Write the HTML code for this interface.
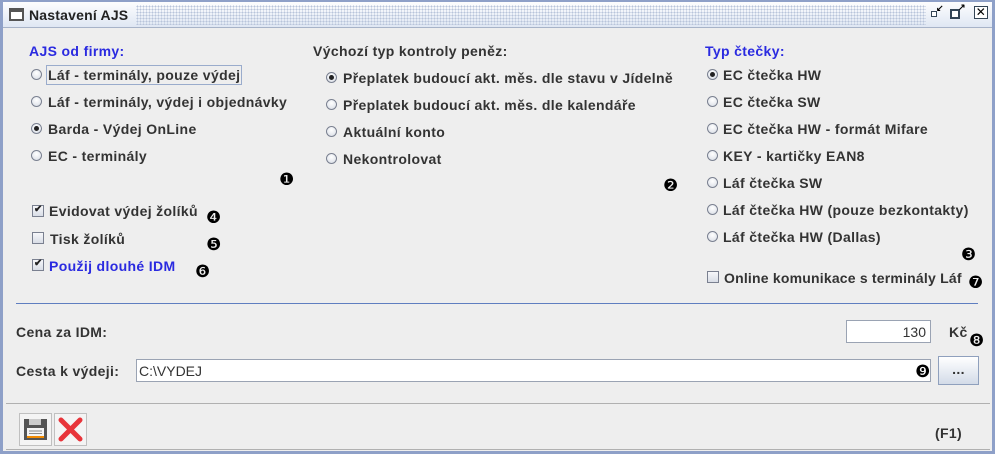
<!DOCTYPE html>
<html><head><meta charset="utf-8"><style>
*{margin:0;padding:0;box-sizing:border-box}
body{width:995px;height:454px;background:#eeeeee;font-family:"Liberation Sans",Arial,sans-serif;font-size:14px;letter-spacing:0.35px;font-weight:bold;color:#333;position:relative;overflow:hidden}
.frame{position:absolute;left:0;top:0;width:995px;height:454px;border:3px solid #8ea0c8;border-top:2px solid #8ea0c8}
.title{position:absolute;left:3px;top:2px;width:989px;height:26px;background:linear-gradient(#fdfdfe,#dfe7f3);border-bottom:1px solid #a7b3c8}
.dots{position:absolute;left:133px;top:3px;width:790px;height:20px;background-image:radial-gradient(#b8c4da 0.8px,transparent 1px);background-size:3px 3px}
.t{position:absolute;white-space:nowrap}
.blue{color:#2a2ae0}
.r{position:absolute;width:11px;height:11px;border-radius:50%;border:1px solid #7a8090;background:radial-gradient(circle at 50% 35%,#fff,#d6dbe4)}
.r.on::after{content:"";position:absolute;left:2px;top:2px;width:5px;height:5px;border-radius:50%;background:#222}
.c{position:absolute;width:12px;height:12px;border:1px solid #7a8090;background:linear-gradient(#f6f7fa,#d8dde6)}
.c.on::after{content:"✔";position:absolute;left:1px;top:-2px;font-size:10px;color:#222}
.n{position:absolute;z-index:5;font-family:"DejaVu Sans",sans-serif;font-size:17px;line-height:17px;color:#000;font-weight:normal;letter-spacing:0}
.inp{position:absolute;background:#fff;border:1px solid #9aa3b3;font-weight:normal;font-size:14px;letter-spacing:0;color:#333}
</style></head><body>
<div class="frame"></div>
<div class="title"><div class="dots"></div></div>
<div style="position:absolute;left:9px;top:8px;width:15px;height:13px;border:2px solid #555;border-top-width:4px;background:#fff"></div>
<div class="t" style="left:29px;top:7px;color:#222;letter-spacing:0.2px">Nastavení AJS</div>
<div style="position:absolute;left:931px;top:11px;width:6px;height:6px;border:1px solid #345;background:#fff"></div>
<div class="t" style="left:936px;top:3px;font-size:9px;color:#000">↙</div>
<div style="position:absolute;left:950px;top:9px;width:10px;height:10px;border:2px solid #345;background:#fff"></div>
<div class="t" style="left:958px;top:2px;font-size:9px;color:#000">↗</div>
<div style="position:absolute;left:974px;top:6px;width:14px;height:13px;border:1px solid #345;background:#fff;font-size:12px;line-height:11px;text-align:center;font-weight:normal;color:#000">✕</div>

<div class="t blue" style="left:29px;top:43px">AJS od firmy:</div>
<div class="r" style="left:31px;top:69px"></div><div class="t" style="left:48px;top:67px;outline:1px solid #9aaccc;outline-offset:1px">Láf - terminály, pouze výdej</div>
<div class="r" style="left:31px;top:96px"></div><div class="t" style="left:48px;top:94px">Láf - terminály, výdej i objednávky</div>
<div class="r on" style="left:31px;top:123px"></div><div class="t" style="left:48px;top:121px">Barda - Výdej OnLine</div>
<div class="r" style="left:31px;top:150px"></div><div class="t" style="left:48px;top:148px">EC - terminály</div>

<div class="t" style="left:313px;top:43px">Výchozí typ kontroly peněz:</div>
<div class="r on" style="left:326px;top:72px"></div><div class="t" style="left:343px;top:70px">Přeplatek budoucí akt. měs. dle stavu v Jídelně</div>
<div class="r" style="left:326px;top:99px"></div><div class="t" style="left:343px;top:97px">Přeplatek budoucí akt. měs. dle kalendáře</div>
<div class="r" style="left:326px;top:126px"></div><div class="t" style="left:343px;top:124px">Aktuální konto</div>
<div class="r" style="left:326px;top:153px"></div><div class="t" style="left:343px;top:151px">Nekontrolovat</div>

<div class="t blue" style="left:705px;top:43px">Typ čtečky:</div>
<div class="r on" style="left:707px;top:69px"></div><div class="t" style="left:723px;top:67px">EC čtečka HW</div>
<div class="r" style="left:707px;top:96px"></div><div class="t" style="left:723px;top:94px">EC čtečka SW</div>
<div class="r" style="left:707px;top:123px"></div><div class="t" style="left:723px;top:121px">EC čtečka HW - formát Mifare</div>
<div class="r" style="left:707px;top:150px"></div><div class="t" style="left:723px;top:148px">KEY - kartičky EAN8</div>
<div class="r" style="left:707px;top:177px"></div><div class="t" style="left:723px;top:175px">Láf čtečka SW</div>
<div class="r" style="left:707px;top:204px"></div><div class="t" style="left:723px;top:202px">Láf čtečka HW (pouze bezkontakty)</div>
<div class="r" style="left:707px;top:231px"></div><div class="t" style="left:723px;top:229px">Láf čtečka HW (Dallas)</div>
<div class="c" style="left:707px;top:271px"></div><div class="t" style="left:724px;top:270px;letter-spacing:0.2px">Online komunikace s terminály Láf</div>

<div class="c on" style="left:32px;top:205px"></div><div class="t" style="left:49px;top:203px">Evidovat výdej žolíků</div>
<div class="c" style="left:32px;top:232px"></div><div class="t" style="left:50px;top:231px">Tisk žolíků</div>
<div class="c on" style="left:32px;top:259px"></div><div class="t blue" style="left:49px;top:258px">Použij dlouhé IDM</div>

<div class="n" style="left:279px;top:172px">❶</div>
<div class="n" style="left:663px;top:178px">❷</div>
<div class="n" style="left:961px;top:247px">❸</div>
<div class="n" style="left:206px;top:210px">❹</div>
<div class="n" style="left:206px;top:237px">❺</div>
<div class="n" style="left:195px;top:264px">❻</div>
<div class="n" style="left:968px;top:275px">❼</div>
<div class="n" style="left:969px;top:333px">❽</div>
<div class="n" style="left:915px;top:364px">❾</div>

<div style="position:absolute;left:16px;top:303px;width:962px;height:1px;background:#5f7ec0"></div>
<div class="t" style="left:16px;top:324px">Cena za IDM:</div>
<div class="inp" style="left:846px;top:320px;width:85px;height:23px;text-align:right;padding:3px 4px">130</div>
<div class="t" style="left:949px;top:324px">Kč</div>
<div class="t" style="left:16px;top:363px">Cesta k výdeji:</div>
<div class="inp" style="left:136px;top:359px;width:795px;height:23px;padding:3px 2px">C:\VYDEJ</div>
<div style="position:absolute;left:938px;top:356px;width:41px;height:29px;border:1px solid #8fa0bd;background:linear-gradient(#fff,#d3dbe8);text-align:center;line-height:24px">...</div>

<div style="position:absolute;left:6px;top:403px;width:984px;height:47px;border-top:1px solid #b0b0b0;border-bottom:1px solid #b0b0b0"></div>
<div style="position:absolute;left:19px;top:413px;width:33px;height:33px;border:1px solid #c0c0c0;background:#f4f4f4">
<svg width="31" height="31" viewBox="0 0 31 31"><rect x="4" y="5" width="23" height="21" fill="#555"/><rect x="9" y="5" width="12" height="6" fill="#ccc"/><rect x="7" y="14" width="17" height="10" fill="#f4f4f4"/><rect x="7" y="22" width="17" height="2" fill="#f28a00"/><line x1="9" y1="17" x2="22" y2="17" stroke="#888"/><line x1="9" y1="19.5" x2="22" y2="19.5" stroke="#888"/></svg></div>
<div style="position:absolute;left:54px;top:413px;width:33px;height:33px;border:1px solid #c0c0c0;background:#f4f4f4">
<svg width="31" height="31" viewBox="0 0 31 31"><path d="M6 6L25 25M25 6L6 25" stroke="#e8343a" stroke-width="5" stroke-linecap="round"/></svg></div>
<div class="t" style="left:935px;top:425px">(F1)</div>
</body></html>
